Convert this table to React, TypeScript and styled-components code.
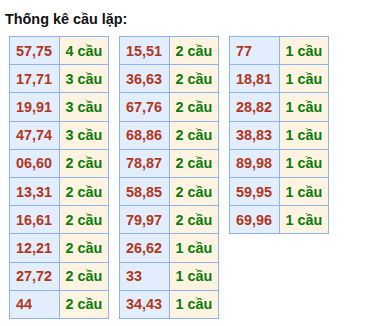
import React from "react";
import styled, { createGlobalStyle } from "styled-components";

const GlobalStyle = createGlobalStyle`
  html, body { margin: 0; padding: 0; background: #ffffff; }
  body { font-family: "Liberation Sans", Arial, sans-serif; }
`;

const Page = styled.div`
  padding: 11px 5px 0 5px;
`;

const Title = styled.div`
  font-size: 14.4px;
  font-weight: bold;
  color: #111111;
  margin: 0 0 9px 0;
`;

const Tables = styled.div`
  display: flex;
  align-items: flex-start;
  gap: 10px;
  padding-left: 4px;
`;

const StatTable = styled.table`
  width: 100px;
  table-layout: fixed;
  border-collapse: collapse;
  border: 1px solid #8fb2f0;
`;

const Cell = styled.td<{ $kind: "pair" | "count" }>`
  width: 50%;
  height: 28.2px;
  padding: 0 0 0 6px;
  box-sizing: border-box;
  border: 1px solid #8fb2f0;
  font-size: 14.4px;
  font-weight: bold;
  white-space: nowrap;
  vertical-align: middle;
  background: ${(p) => (p.$kind === "pair" ? "#e2eefd" : "#fff4e2")};
  color: ${(p) => (p.$kind === "pair" ? "#b2361c" : "#0b7b0b")};
`;

type Row = [string, number];

const data: Row[][] = [
  [
    ["57,75", 4],
    ["17,71", 3],
    ["19,91", 3],
    ["47,74", 3],
    ["06,60", 2],
    ["13,31", 2],
    ["16,61", 2],
    ["12,21", 2],
    ["27,72", 2],
    ["44", 2],
  ],
  [
    ["15,51", 2],
    ["36,63", 2],
    ["67,76", 2],
    ["68,86", 2],
    ["78,87", 2],
    ["58,85", 2],
    ["79,97", 2],
    ["26,62", 1],
    ["33", 1],
    ["34,43", 1],
  ],
  [
    ["77", 1],
    ["18,81", 1],
    ["28,82", 1],
    ["38,83", 1],
    ["89,98", 1],
    ["59,95", 1],
    ["69,96", 1],
  ],
];

export default function App() {
  return (
    <>
      <GlobalStyle />
      <Page>
        <Title>Thống kê cầu lặp:</Title>
        <Tables>
          {data.map((rows, i) => (
            <StatTable key={i}>
              <tbody>
                {rows.map(([pair, n]) => (
                  <tr key={pair}>
                    <Cell $kind="pair">{pair}</Cell>
                    <Cell $kind="count">{n} cầu</Cell>
                  </tr>
                ))}
              </tbody>
            </StatTable>
          ))}
        </Tables>
      </Page>
    </>
  );
}
